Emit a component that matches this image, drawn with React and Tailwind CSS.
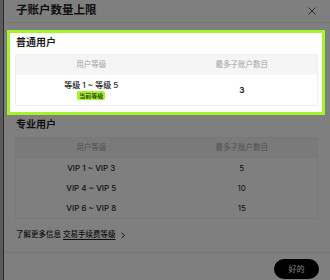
import React from 'react';

const proRows = [
  { level: 'VIP 1 ~ VIP 3', max: '5' },
  { level: 'VIP 4 ~ VIP 5', max: '10' },
  { level: 'VIP 6 ~ VIP 8', max: '15' },
];

const TableHead = () => (
  <div className="grid grid-cols-2 h-[20px] items-center bg-[#f5f5f5] text-[7.5px] text-[#a3a3a3] text-center">
    <div>用户等级</div>
    <div>最多子账户数目</div>
  </div>
);

export default function App() {
  return (
    <div
      className="w-[330px] h-[280px] overflow-hidden bg-[#b4b4b4] text-[#1e1e1e]"
      style={{ fontFamily: 'Inter, "Noto Sans CJK SC", sans-serif' }}
    >
      <div className="ml-[3px] h-full bg-white border-l border-[#555] flex flex-col">
        {/* Header */}
        <div className="h-[23px] pl-[12px] pr-[14px] flex items-center justify-between border-b border-[#ececec]">
          <span className="text-[11.5px] font-bold leading-none">子账户数量上限</span>
          <svg width="8" height="8" viewBox="0 0 8 8" className="text-[#555]">
            <path d="M0.5 0.5L7.5 7.5M7.5 0.5L0.5 7.5" stroke="currentColor" strokeWidth="1" />
          </svg>
        </div>

        {/* Body */}
        <div className="pl-[3px] pr-[5px] pt-[7px]">
          {/* Highlighted: 普通用户 */}
          <div className="relative z-10 bg-white border-[3px] border-[#a6f22c] pl-[5px] pr-[4px] pb-[6px] shadow-[0_0_0_2000px_rgba(0,0,0,0.5)]">
            <div className="h-[18px] pl-[1px] flex items-center text-[10px] font-bold">普通用户</div>
            <div className="mt-[3px] border border-[#f0f0f0]">
              <TableHead />
              <div className="grid grid-cols-2 h-[30px] items-center text-center text-[8px]">
                <div className="flex flex-col items-center gap-[1px]">
                  <span className="font-medium leading-[10px]">等级 1 ~ 等级 5</span>
                  <span className="bg-[#a6f22c] rounded-[2px] px-[2px] text-[6px] leading-[9px] font-medium">当前等级</span>
                </div>
                <div className="font-bold">3</div>
              </div>
            </div>
          </div>

          {/* 专业用户 */}
          <div className="pl-[9px] pr-[7px]">
            <div className="h-[18px] flex items-center text-[10px] font-bold">专业用户</div>
          </div>
          <div className="mt-[4px] ml-[8px] mr-[7px] border border-[#f0f0f0]">
            <TableHead />
            {proRows.map((r) => (
              <div key={r.level} className="grid grid-cols-2 h-[20px] items-center text-center text-[8px]">
                <div className="font-medium">{r.level}</div>
                <div>{r.max}</div>
              </div>
            ))}
          </div>

          <div className="mt-[8px] h-[16px] pl-[9px] flex items-center gap-[2px] text-[7.5px] font-medium">
            <span>了解更多信息</span>
            <span className="underline underline-offset-2">交易手续费等级</span>
            <svg width="6" height="7" viewBox="0 0 6 7" className="ml-[2px]">
              <path d="M1.5 0.8L4.5 3.5L1.5 6.2" fill="none" stroke="#1e1e1e" strokeWidth="0.9" />
            </svg>
          </div>
        </div>

        {/* Footer */}
        <div className="mt-[9px] border-t border-[#ececec] flex justify-end pr-[11px] pt-[6px]">
          <button className="w-[45px] h-[20px] rounded-full bg-black text-white text-[8px]">好的</button>
        </div>
      </div>
    </div>
  );
}
